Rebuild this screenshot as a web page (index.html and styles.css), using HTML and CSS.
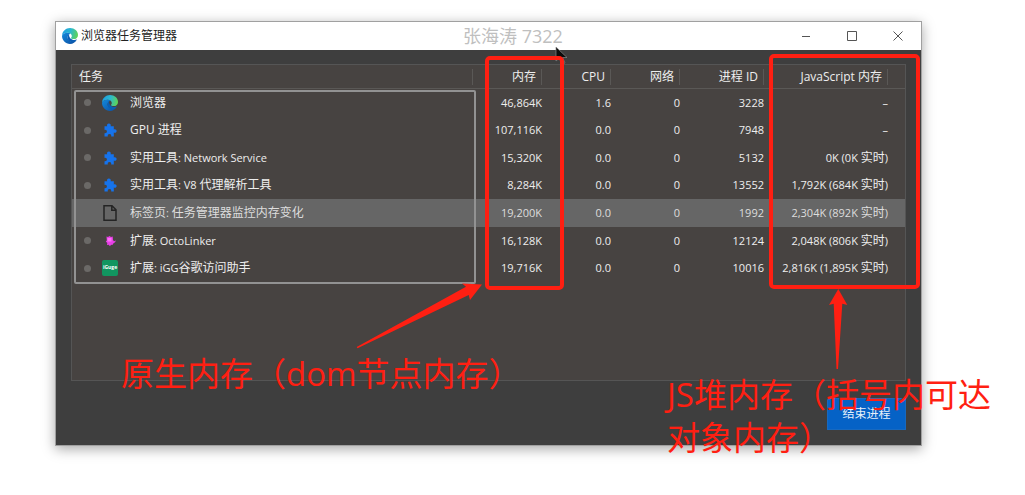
FILE: index.html
```html
<!DOCTYPE html>
<html lang="zh-CN">
<head>
<meta charset="utf-8">
<title>浏览器任务管理器</title>
<link rel="stylesheet" href="styles.css">
</head>
<body>
<svg class="defs" width="0" height="0" aria-hidden="true">
  <defs>
    <linearGradient id="edge-top" x1="0" y1="0.3" x2="1" y2="0.5">
      <stop offset="0" stop-color="#1b9de2"/><stop offset="0.5" stop-color="#2bb8cf"/><stop offset="1" stop-color="#5fd455"/>
    </linearGradient>
    <linearGradient id="edge-low" x1="0" y1="0" x2="1" y2="1">
      <stop offset="0" stop-color="#1389dc"/><stop offset="1" stop-color="#0c4da0"/>
    </linearGradient>
    <symbol id="edge" viewBox="0 0 16 16">
      <path d="M0 7.600C.3 3.300 3.800 0 8 0c4.600 0 8 3 8 6.900 0 2.500-1.800 4.200-4.300 4.200-1.700 0-2.700-.5-2.700-1.100 0-.5.8-.8.8-2 0-1.700-1.600-3.200-4-3.200C3 4.800.8 6 0 7.600z" fill="url(#edge-top)"/>
      <path d="M0 7.800c.8-1.900 2.900-3 5.500-3 1.300 0 2.300.3 3 .9-1.700.3-2.900 1.800-2.900 3.800 0 2.200 2 4 4.700 4 1.700 0 3.200-.5 4.400-1.700C13.400 14.400 11 16 8 16c-4.500 0-8-3.700-8-8.200z" fill="url(#edge-low)"/>
      <path d="M5.600 9.500c0-1.500.6-2.600 1.500-3.200-.4 3.500 2.200 5.700 5.200 5.800 1 0 1.900-.3 2.700-.8-1.200 2-2.700 2.900-4.600 2.900-2.700 0-4.800-2.100-4.800-4.700z" fill="#0a5eb4"/>
    </symbol>
    <symbol id="puzzle" viewBox="0 0 14 14">
      <path d="M1.500 3.300h2.700C3.600 1.600 4.500.5 5.900.5s2.300 1.100 1.700 2.800h3.200v3.100c1.700-.5 2.800.3 2.800 1.600s-1.100 2.200-2.800 1.600v3.900H8.200c.3-1.700-.5-2.500-1.700-2.500s-2.100.8-1.700 2.500H1.500v-3.300c1.600.2 2.400-.6 2.400-1.700S3.100 6.600 1.500 6.900z" fill="#1673ec"/>
    </symbol>
  </defs>
</svg>
<main class="stage">
  <section class="window">
    <header class="titlebar">
      <svg class="icon"><use href="#edge"/></svg>
      <h1 class="title">浏览器任务管理器</h1>
      <div class="controls">
        <button class="control" type="button" aria-label="最小化"><svg viewBox="0 0 10 10"><path d="M1 5.500h8"/></svg></button>
        <button class="control" type="button" aria-label="最大化"><svg viewBox="0 0 10 10"><path d="M.5.500h9v9h-9z"/></svg></button>
        <button class="control" type="button" aria-label="关闭"><svg viewBox="0 0 10 10"><path d="M.5.500l9 9M9.500.5l-9 9"/></svg></button>
      </div>
    </header>
    <div class="content">
      <div class="panel">
        <table class="tasks">
          <colgroup><col><col class="c-num"><col class="c-num"><col class="c-num"><col class="c-pid"><col class="c-js"><col class="c-end"></colgroup>
          <thead>
            <tr><th class="name">任务</th><th>内存</th><th>CPU</th><th>网络</th><th>进程 ID</th><th>JavaScript 内存</th><td></td></tr>
          </thead>
          <tbody>
            <tr><td><div class="task"><i class="dot"></i><svg class="icon"><use href="#edge"/></svg>浏览器</div></td><td>46,864K</td><td>1.6</td><td>0</td><td>3228</td><td>–</td><td></td></tr>
            <tr><td><div class="task"><i class="dot"></i><svg class="icon small"><use href="#puzzle"/></svg>GPU 进程</div></td><td>107,116K</td><td>0.0</td><td>0</td><td>7948</td><td>–</td><td></td></tr>
            <tr><td><div class="task"><i class="dot"></i><svg class="icon small"><use href="#puzzle"/></svg><span>实用工具<span class="latin">: Network Service</span></span></div></td><td>15,320K</td><td>0.0</td><td>0</td><td>5132</td><td>0K (0K <span class="live">实时</span>)</td><td></td></tr>
            <tr><td><div class="task"><i class="dot"></i><svg class="icon small"><use href="#puzzle"/></svg><span>实用工具<span class="latin">: V8 </span>代理解析工具</span></div></td><td>8,284K</td><td>0.0</td><td>0</td><td>13552</td><td>1,792K (684K <span class="live">实时</span>)</td><td></td></tr>
            <tr class="selected"><td><div class="task"><i class="dot none"></i><svg class="icon" viewBox="0 0 16 16"><path d="M2 .8h8l4 4v10.400H2zM9.800.8v4.400H14" fill="none" stroke="#242424" stroke-width="1.500"/></svg><span>标签页<span class="latin">: </span>任务管理器监控内存变化</span></div></td><td>19,200K</td><td>0.0</td><td>0</td><td>1992</td><td>2,304K (892K <span class="live">实时</span>)</td><td></td></tr>
            <tr><td><div class="task"><i class="dot"></i><svg class="icon" viewBox="0 0 16 16"><path d="M4.500 3.500l1.500.5 1.500-1L9 4l1.700-.5.3 3.500 1 1.300 2-.8-1 1.800-2 1.500-.5 1.200-1.500-.3-1 1.600-1.300-1.500-1.700.2.300-2-1.500-1.500 1-1z" fill="#e83fe6"/><path d="M5.500 5h4v3.500h-4z" fill="#ff70fa"/></svg><span>扩展<span class="latin">: OctoLinker</span></span></div></td><td>16,128K</td><td>0.0</td><td>0</td><td>12124</td><td>2,048K (806K <span class="live">实时</span>)</td><td></td></tr>
            <tr><td><div class="task"><i class="dot"></i><span class="icon igg">iGuge</span><span>扩展<span class="latin">: iGG</span>谷歌访问助手</span></div></td><td>19,716K</td><td>0.0</td><td>0</td><td>10016</td><td>2,816K (1,895K <span class="live">实时</span>)</td><td></td></tr>
          </tbody>
        </table>
      </div>
      <div class="actions"><button class="end" type="button">结束进程</button></div>
    </div>
  </section>
  <span class="watermark">张海涛 7322</span>
  <svg class="marks" width="1025" height="495" viewBox="0 0 1025 495" aria-hidden="true">
    <path d="M556 47v14l3.500-3 3 6 2.500-1-2.500-5.500h4.500z" fill="#0c0c0c" stroke="#888" stroke-width=".7"/>
    <rect x="75" y="91" width="400" height="192" rx="1" fill="none" stroke="#929292" stroke-width="2"/>
    <g fill="none" stroke="#ff1f12" stroke-width="4">
      <rect x="487" y="58" width="75" height="230" rx="3"/>
      <rect x="771" y="56" width="147" height="231" rx="3"/>
    </g>
    <g fill="#ff1f12">
      <path d="M482 284.500l-20-1 4 3.200L356.700 347l.8 1.300L468.700 295l1.300 5z"/>
      <path d="M838.300 289l-9.300 16 4.700-1.300 2.800 65.300h1.500l4.300-65.300 5 1.300z"/>
    </g>
  </svg>
  <p class="note native">原生内存（dom节点内存）</p>
  <p class="note heap">JS堆内存（括号内可达<br>对象内存）</p>
</main>
</body>
</html>
```
FILE: styles.css
```css
* { box-sizing: border-box; }
body {
  margin: 0;
  background: #fff;
  font: 12px/16px "Open Sans", "Noto Sans CJK SC", sans-serif;
}
.defs { position: absolute; }
.stage {
  position: relative;
  min-height: 100vh;
  padding: 21px 103px 49px 55px;
  overflow: hidden;
}
.window {
  border: 1px solid #a0a0a0;
  background: #3e3e3e;
  box-shadow: 0 3px 12px rgba(0, 0, 0, .35);
}
.titlebar {
  display: flex;
  align-items: center;
  height: 28px;
  padding: 0 0 0 6px;
  gap: 3px;
  background: #fff;
}
.title { margin: 0; font-size: 12px; font-weight: 400; color: #222; }
.icon { display: block; flex: none; width: 16px; height: 16px; }
.controls { display: flex; margin-left: auto; }
.control {
  display: grid;
  place-items: center;
  width: 46px;
  height: 28px;
  padding: 0;
  border: 0;
  background: none;
}
.control svg { width: 10px; height: 10px; fill: none; stroke: #555; }
.content { padding: 14px 15px 15px; }
.panel { min-height: 317px; border: 1px solid #555; background: #474341; }
.tasks {
  width: 100%;
  height: 217px;
  table-layout: fixed;
  border-collapse: separate;
  border-spacing: 0;
  color: #eee;
}
.c-num { width: 69px; }
.c-pid { width: 84px; }
.c-js { width: 124px; }
.c-end { width: 17px; }
.tasks th, .tasks td { padding: 0; text-align: right; white-space: nowrap; }
.tasks thead th, .tasks thead td { height: 24px; border-bottom: 1px solid #5a5856; }
.tasks th {
  padding-right: 6px;
  font-size: 12px;
  font-weight: 400;
  background: linear-gradient(#5a5856, #5a5856) right center / 1px 16px no-repeat;
}
.tasks .name { padding-left: 7px; text-align: left; }
.tasks tbody td { font-size: 11px; font-weight: 500; }
.tasks tbody .live { font-size: 12px; font-weight: 400; }
.tasks .selected td { background: #666; color: #ddd; }
.task {
  display: flex;
  align-items: center;
  padding-left: 12px;
  font-size: 12px;
  font-weight: 400;
}
.latin { font-size: 11px; font-weight: 500; white-space: pre; }
.task .icon { margin: 0 12px 0 11px; }
.task .small { padding: 1px; }
.dot { width: 7px; height: 7px; border-radius: 50%; background: #6b6967; }
.none { background: none; }
.igg {
  border-radius: 2px;
  background: #119660;
  color: #fff;
  font-size: 5px;
  font-weight: 700;
  line-height: 15px;
  text-align: center;
}
.actions { display: flex; justify-content: flex-end; padding-top: 17px; }
.end {
  min-width: 79px;
  height: 32px;
  padding: 0 12px;
  border: 1px solid #1769c0;
  background: #0562c6;
  color: #e6f0fa;
  font: inherit;
}
.watermark {
  position: absolute;
  top: 24px;
  left: 463px;
  color: #bfbfbf;
  font-size: 18px;
  line-height: 24px;
}
.marks { position: absolute; top: 0; left: 0; pointer-events: none; }
.note {
  position: absolute;
  margin: 0;
  color: #ff1f12;
  font-size: 33px;
  font-weight: 400;
  line-height: 43px;
  white-space: nowrap;
}
.native { top: 352px; left: 121px; }
.heap { top: 373px; left: 667px; }
```
